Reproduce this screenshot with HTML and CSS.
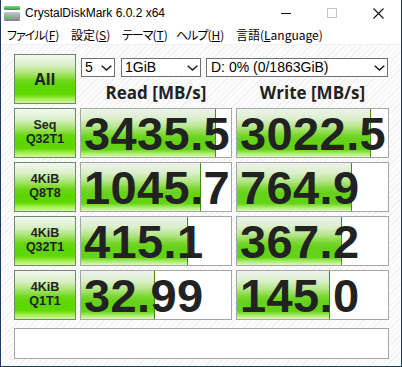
FILE: index.html
```html
<!DOCTYPE html>
<html lang="ja">
<head>
<meta charset="utf-8">
<title>CrystalDiskMark 6.0.2 x64</title>
<link rel="stylesheet" href="styles.css">
</head>
<body>
<div class="win">
  <div class="titlebar">
    <svg class="appicon" width="16" height="16" viewBox="0 0 16 16">
      <defs>
        <linearGradient id="gbar" x1="0" y1="0" x2="0" y2="1">
          <stop offset="0" stop-color="#7fd67f"/>
          <stop offset="1" stop-color="#2f9a3c"/>
        </linearGradient>
        <linearGradient id="gbody" x1="0" y1="0" x2="0" y2="1">
          <stop offset="0" stop-color="#c4c8cc"/>
          <stop offset="1" stop-color="#7d848b"/>
        </linearGradient>
      </defs>
      <rect x="0" y="0" width="16" height="4" rx="1" fill="url(#gbar)"/>
      <rect x="0" y="6" width="16" height="9" rx="1" fill="url(#gbody)"/>
      <rect x="2" y="10" width="5" height="2" fill="#5fd35f"/>
    </svg>
    <span class="title">CrystalDiskMark 6.0.2 x64</span>
    <div class="caption">
      <span class="cbtn"><svg width="10" height="10" viewBox="0 0 10 10"><line x1="0" y1="5.5" x2="10" y2="5.5" stroke="#111" stroke-width="1"/></svg></span>
      <span class="cbtn"><svg width="10" height="10" viewBox="0 0 10 10"><rect x="0.5" y="0.5" width="9" height="9" fill="none" stroke="#c4c4c4" stroke-width="1"/></svg></span>
      <span class="cbtn"><svg width="11" height="11" viewBox="0 0 11 11"><path d="M0.5 0.5 L10.5 10.5 M10.5 0.5 L0.5 10.5" stroke="#111" stroke-width="1.1" fill="none"/></svg></span>
    </div>
  </div>
  <div class="menubar">
    <span class="mi m1"><span class="kana">ファイル</span>(<u>F</u>)</span>
    <span class="mi m2">設定(<u>S</u>)</span>
    <span class="mi m3"><span class="kana">テーマ</span>(<u>T</u>)</span>
    <span class="mi m4"><span class="kana">ヘルプ</span>(<u>H</u>)</span>
    <span class="mi">言語(<u>L</u>anguage)</span>
  </div>
  <div class="client">
    <div class="grid">
      <div class="btn allbtn">All</div>
      <div class="topright">
        <div class="selects">
          <div class="combo c1"><span>5</span><svg class="chev" width="11" height="6" viewBox="0 0 11 6"><path d="M0.7 0.7 L5.5 5 L10.3 0.7" fill="none" stroke="#1a1a1a" stroke-width="1.5"/></svg></div>
          <div class="combo c2"><span>1GiB</span><svg class="chev" width="11" height="6" viewBox="0 0 11 6"><path d="M0.7 0.7 L5.5 5 L10.3 0.7" fill="none" stroke="#1a1a1a" stroke-width="1.5"/></svg></div>
          <div class="combo c3"><span>D: 0% (0/1863GiB)</span><svg class="chev" width="11" height="6" viewBox="0 0 11 6"><path d="M0.7 0.7 L5.5 5 L10.3 0.7" fill="none" stroke="#1a1a1a" stroke-width="1.5"/></svg></div>
        </div>
        <div class="heads">
          <div class="head">Read [MB/s]</div>
          <div class="head">Write [MB/s]</div>
        </div>
      </div>

      <div class="btn lbl"><span>Seq</span><span>Q32T1</span></div>
      <div class="val"><div class="bar" style="width:90%"></div><span class="num">3435.5</span></div>
      <div class="val"><div class="bar" style="width:88.7%"></div><span class="num">3022.5</span></div>

      <div class="btn lbl"><span>4KiB</span><span>Q8T8</span></div>
      <div class="val"><div class="bar" style="width:80%"></div><span class="num">1045.7</span></div>
      <div class="val"><div class="bar" style="width:76%"></div><span class="num">764.9</span></div>

      <div class="btn lbl"><span>4KiB</span><span>Q32T1</span></div>
      <div class="val"><div class="bar" style="width:71.5%"></div><span class="num">415.1</span></div>
      <div class="val"><div class="bar" style="width:69.5%"></div><span class="num">367.2</span></div>

      <div class="btn lbl"><span>4KiB</span><span>Q1T1</span></div>
      <div class="val"><div class="bar" style="width:49.3%"></div><span class="num">32.99</span></div>
      <div class="val"><div class="bar" style="width:61.6%"></div><span class="num">145.0</span></div>
    </div>
    <div class="status"></div>
  </div>
</div>
</body>
</html>
```
FILE: styles.css
```css
* { box-sizing: border-box; }
html, body { margin: 0; padding: 0; }
body { width: 402px; height: 367px; overflow: hidden; background: #fff; }

.win {
  width: 402px; height: 367px;
  border: 1px solid #1c3c5e; border-top: none;
  background: #fff;
  display: flex; flex-direction: column;
}

.titlebar {
  height: 26px; flex: none;
  display: flex; align-items: center;
  padding-left: 3px;
}
.appicon { display: block; margin-top: 1px; }
.title {
  margin-left: 5px;
  font-family: "Liberation Sans", Arial, sans-serif;
  font-size: 12px; color: #000;
}
.caption { margin-left: auto; display: flex; height: 26px; }
.cbtn { width: 46px; height: 26px; display: flex; align-items: center; justify-content: center; }

.menubar {
  height: 19px; flex: none;
  display: flex; align-items: center;
  padding-left: 6px;
  border-bottom: 1px solid #f0f0f0;
  font-family: "Noto Sans CJK JP", sans-serif;
  font-feature-settings: "palt";
  font-size: 12px; color: #000;
  line-height: 18px;
}
.mi { white-space: nowrap; }
.mi u { text-decoration-thickness: 1px; text-underline-offset: 1px; }
.kana { letter-spacing: -1px; }
.m1 { width: 64px; }
.m2 { width: 51px; }
.m3 { width: 54px; }
.m4 { width: 60px; }

.client {
  flex: 1;
  padding: 9px 0 0 13px;
  background: repeating-linear-gradient(135deg, #fcfcfc 0 3px, #f1f1f1 3px 4px);
}

.grid {
  display: grid;
  grid-template-columns: 62px 152px 153px;
  grid-auto-rows: 50px;
  gap: 4px;
}

.btn {
  border: 1px solid #6d8a6d;
  background: linear-gradient(to bottom, #f5f8f2 0%, #d9f0c6 22%, #a3e468 40%, #6bd613 55%, #5cd600 68%, #5fd800 82%, #9cec45 90%, #d2f7a2 100%);
  color: #222;
  font-weight: 700;
  display: flex; flex-direction: column; align-items: center; justify-content: center;
}
.allbtn { font-family: "Open Sans", sans-serif; font-size: 16px; line-height: 22px; }
.lbl {
  font-family: "Liberation Sans", Arial, sans-serif;
  font-size: 12.5px; line-height: 14.5px; padding-bottom: 2px;
}

.topright { grid-column: 2 / 4; display: flex; flex-direction: column; }
.selects { display: flex; margin-top: 4px; padding-left: 1px; height: 19px; }
.combo {
  height: 19px;
  border: 1px solid #707070; background: #fff;
  display: flex; align-items: center; justify-content: space-between;
  padding: 0 2px 0 3px;
  font-family: "Liberation Sans", Arial, sans-serif;
  font-size: 14px; color: #000; line-height: 17px;
}
.c1 { width: 34px; }
.c2 { width: 80px; margin-left: 6px; }
.c3 { width: 182px; margin-left: 5px; padding-left: 4px; }
.chev { display: block; }

.heads {
  display: grid; grid-template-columns: 152px 153px; column-gap: 4px;
  margin-top: 4px;
}
.head {
  text-align: center;
  font-family: "Open Sans", sans-serif; font-weight: 700;
  font-size: 17px; line-height: 23px; color: #222;
}

.val {
  position: relative;
  border: 1px solid #a6a6a6; background: #fff;
}
.bar {
  position: absolute; left: 0; top: 0; bottom: 0;
  background: linear-gradient(to bottom, #eef2ec 0%, #dcefcd 20%, #b3e686 38%, #7fd836 52%, #66d21a 62%, #63d316 84%, #a6ea68 92%, #dcf8bd 100%);
  border-right: 1px solid #3f8f12;
}
.num {
  position: relative;
  display: block;
  padding-left: 3px;
  font-family: "Liberation Sans", Arial, sans-serif; font-weight: 700;
  font-size: 47px; line-height: 49px; letter-spacing: 0.4px; color: #222;
  white-space: nowrap;
}

.status {
  margin-top: 8px;
  width: 375px; height: 31px;
  border: 1px solid #a6a6a6;
  background: #fff;
}
```
